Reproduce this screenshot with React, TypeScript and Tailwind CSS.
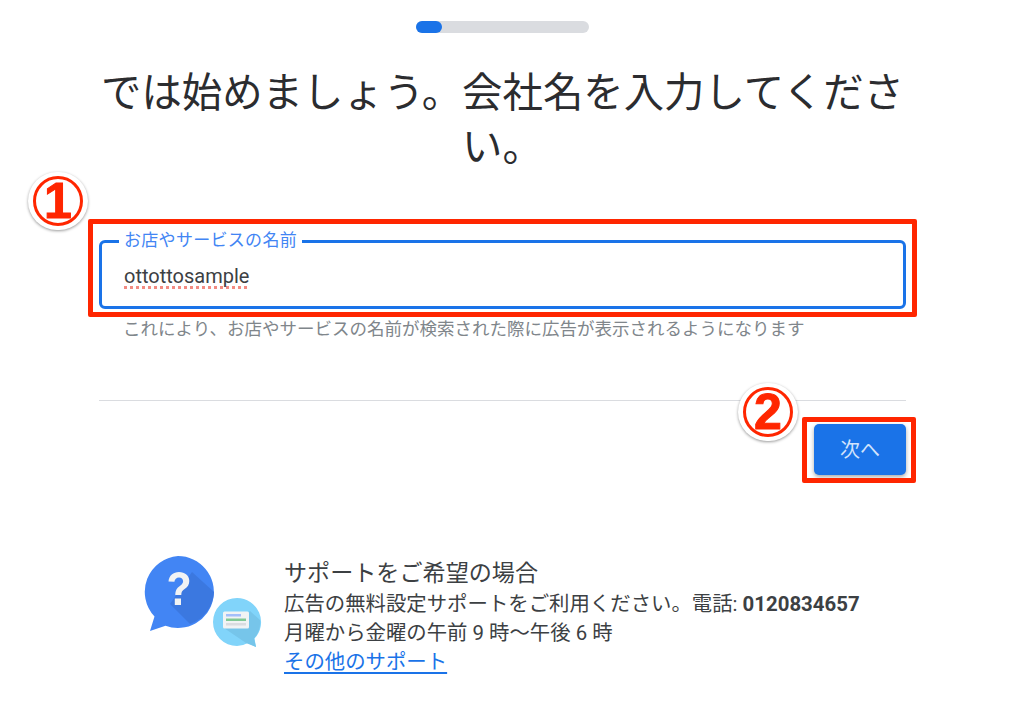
const jp = "font-['Roboto','Noto_Sans_CJK_JP',sans-serif]"

function SupportIcon() {
  return (
    <svg width="122" height="96" viewBox="0 0 122 96" className="shrink-0">
      {/* big bubble */}
      <path d="M38 2a36 36 0 1 1-12.500 69.800L10 77l4.500-14.500A36 36 0 0 1 38 2Z" fill="#4285f4" />
      <path d="M52 18 74 38a36 36 0 0 1-24 32L30 50Z" fill="#3b78e0" />
      <path d="M28.500 27.500c.6-6 4.800-9.500 10.500-9.500 5.900 0 10.300 3.700 10.300 9 0 3.800-1.800 6-4.700 8.100-2.500 1.800-3.300 3-3.300 5.900h-6c0-4.700 1.500-6.900 4.800-9.300 2-1.500 3-2.700 3-4.500 0-2.200-1.700-3.800-4.100-3.800-2.600 0-4.200 1.700-4.600 4.300Z" fill="#f1f3f4" />
      <rect x="34.800" y="44.500" width="6.200" height="6.500" fill="#f1f3f4" />
      {/* small bubble */}
      <path d="M97 44a24 24 0 0 1 17.500 40.500L116 93l-8-4A24 24 0 0 1 97 92a24 24 0 0 1 0-48Z" fill="#81d4fa" />
      <path d="M110 57 120 66a24 24 0 0 1-6 18.500L116 93l-10-4-22-15Z" fill="#76c5ea" />
      <rect x="83" y="57.500" width="26" height="17" rx="1.500" fill="#f1f3f4" />
      <rect x="86" y="60" width="15" height="2.500" fill="#a3bffa" />
      <rect x="86" y="64.500" width="20" height="2.500" fill="#81c995" />
      <rect x="86" y="69" width="20" height="2.500" fill="#dadce0" />
    </svg>
  )
}

function Badge({ n, className }: { n: string; className: string }) {
  return (
    <div className={`absolute flex h-[58px] w-[60px] items-center justify-center rounded-full bg-white shadow-[0_1px_3px_rgba(0,0,0,0.4)] ${className}`}>
      <div className="flex h-[50px] w-[50px] items-center justify-center rounded-full border-[3px] border-[#ff2600] font-['Liberation_Sans',sans-serif] text-[50px] font-bold leading-none text-[#ff2600] [-webkit-text-stroke:1px_#ff2600]">
        {n}
      </div>
    </div>
  )
}

export default function App() {
  return (
    <div className="h-[716px] w-[1024px] overflow-hidden bg-white">
      <div className={`${jp} flex w-[1005px] flex-col items-center`}>

        {/* progress */}
        <div className="mt-[21px] h-3 w-[173px] rounded-full bg-[#dadce0]">
          <div className="h-3 w-[26px] rounded-full bg-[#1a73e8]" />
        </div>

        <h1 className="mt-[34px] w-[810px] text-center text-[40.4px] font-normal leading-[54px] text-[#2b2c2f]">
          では始めましょう。会社名を入力してください。
        </h1>

        <div className="relative mt-[65px] w-[807px]">
          <Badge n="1" className="left-[-71px] top-[-68px]" />
          <div className="pointer-events-none absolute left-[-11px] top-[-21px] h-[98px] w-[829px] rounded-[2px] border-[5px] border-[#ff2600]" />

          {/* field */}
          <div className="relative h-[69px] rounded-[6px] border-[3px] border-[#1a73e8] pl-[22px] pt-[18px]">
            <span className="absolute left-[17px] top-[-13px] bg-white px-[5px] text-[17px] leading-[20px] tracking-[0.3px] text-[#4285f4]">
              お店やサービスの名前
            </span>
            <span className="text-[20px] leading-[30px] text-[#3c4043] underline decoration-[#f28b82] decoration-dotted decoration-[3px] underline-offset-[3px] [text-decoration-skip-ink:none]">
              ottottosample
            </span>
          </div>

          <p className="mt-[9px] pl-[24px] text-[17.5px] leading-[22px] text-[#80868b]">
            これにより、お店やサービスの名前が検索された際に広告が表示されるようになります
          </p>

          <div className="mt-[60px] border-t border-[#dadce0]" />

          <div className="relative mt-[23px] flex justify-end">
            <Badge n="2" className="left-[639px] top-[-41px]" />
            <div className="pointer-events-none absolute left-[703px] top-[-7px] h-[66px] w-[114px] rounded-[2px] border-[5px] border-[#ff2600]" />
            <button className="h-[51px] w-[92px] rounded-[5px] bg-[#1a73e8] text-[20px] text-[#d2e3fc] shadow-[0_2px_4px_rgba(60,64,67,0.45)]">
              次へ
            </button>
          </div>
        </div>

        {/* support */}
        <div className="mt-[79px] flex w-[725px] gap-[22px]">
          <SupportIcon />
          <div className="pt-1 text-[20.4px] leading-[29px] text-[#3c4043]">
            <div className="text-[23.1px] leading-[32px]">サポートをご希望の場合</div>
            <div>
              広告の無料設定サポートをご利用ください。電話: <span className="font-bold">0120834657</span>
            </div>
            <div>月曜から金曜の午前 9 時〜午後 6 時</div>
            <a className="text-[#1a73e8] underline underline-offset-[3px]">その他のサポート</a>
          </div>
        </div>
      </div>
    </div>
  )
}
